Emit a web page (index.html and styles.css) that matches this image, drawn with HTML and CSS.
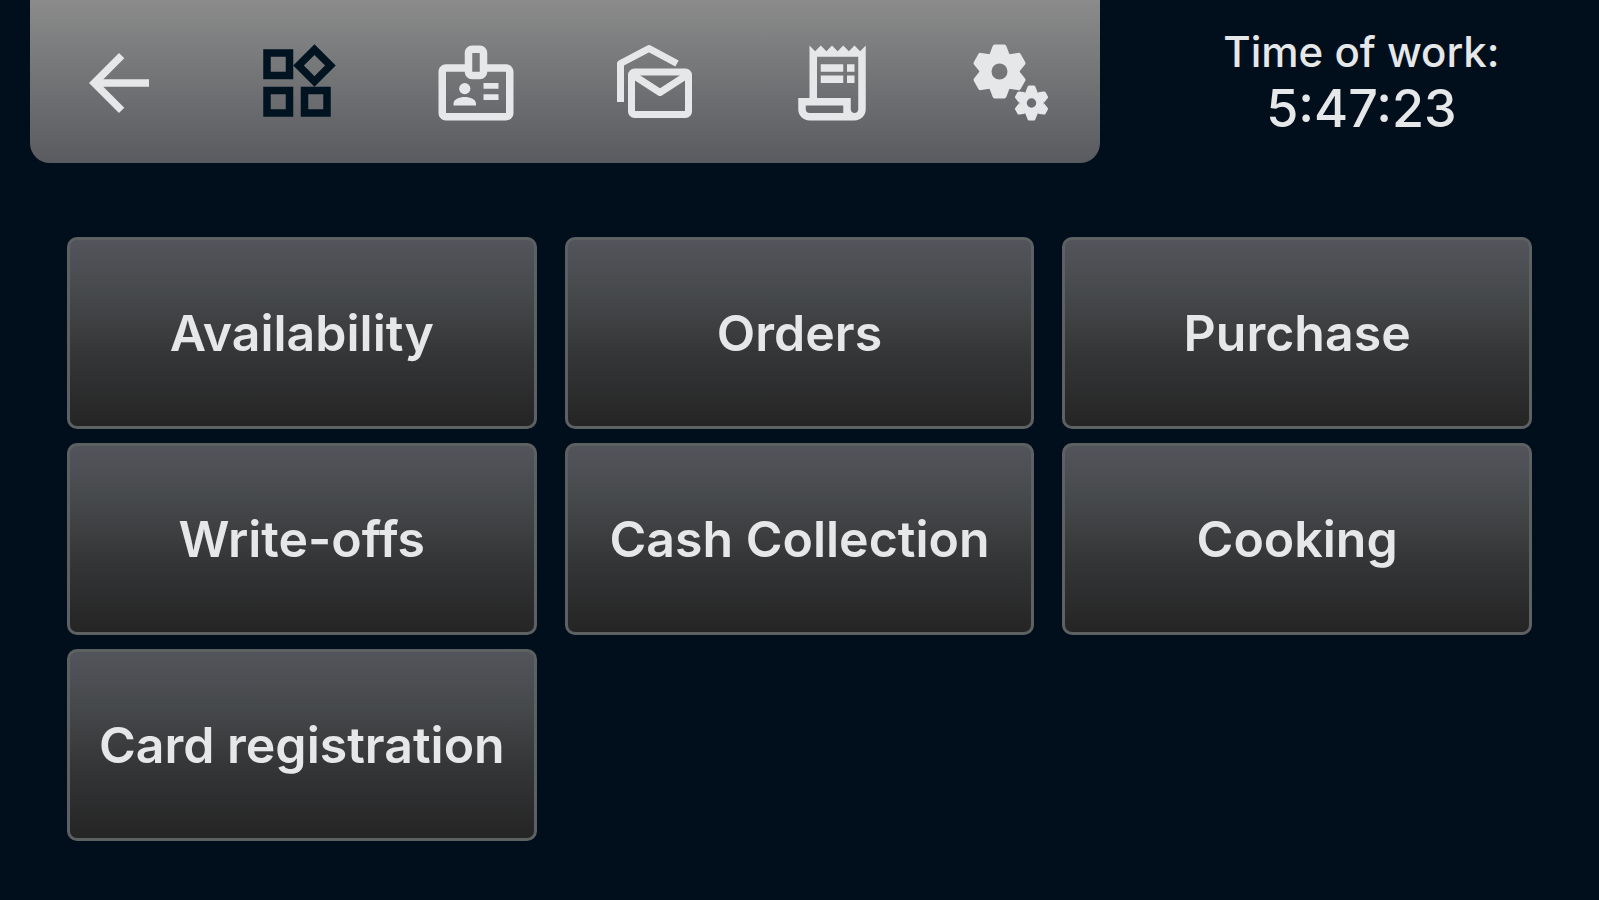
FILE: index.html
```html
<!DOCTYPE html>
<html lang="en">
<head>
  <meta charset="utf-8">
  <meta name="viewport" content="width=device-width, initial-scale=1">
  <title>Terminal menu</title>
  <link rel="stylesheet" href="styles.css">
</head>
<body>
  <header class="topbar">
    <nav class="toolbar" aria-label="Main">
      <button class="tool" type="button" aria-label="Back">
        <svg class="icon" viewBox="0 0 24 24"><path d="M20 11H7.83l5.59-5.59L12 4l-8 8 8 8 1.41-1.41L7.83 13H20z"/></svg>
      </button>
      <button class="tool tool--active" type="button" aria-label="Modules" aria-current="page">
        <svg class="icon" viewBox="0 0 24 24"><path d="M16.66 4.52l2.83 2.83-2.83 2.83-2.83-2.83 2.83-2.83M9 5v4H5V5h4m10 10v4h-4v-4h4M9 15v4H5v-4h4m7.66-13.31L11 7.34 16.66 13l5.66-5.66-5.66-5.65zM11 3H3v8h8V3zm10 10h-8v8h8v-8zm-10 0H3v8h8v-8z"/></svg>
      </button>
      <button class="tool" type="button" aria-label="Staff">
        <svg class="icon" viewBox="0 0 24 24"><path d="M20 7h-5V4c0-1.1-.9-2-2-2h-2c-1.1 0-2 .9-2 2v3H4c-1.1 0-2 .9-2 2v11c0 1.1.9 2 2 2h16c1.1 0 2-.9 2-2V9c0-1.1-.9-2-2-2zm-9-3h2v5h-2V4zm9 16H4V9h5c0 1.1.9 2 2 2h2c1.1 0 2-.9 2-2h5v11z"/><circle cx="9" cy="13.5" r="1.5"/><path d="M11.08 16.18C10.44 15.9 9.74 15.75 9 15.75s-1.44.15-2.08.43c-.56.24-.92.79-.92 1.39V18h6v-.43c0-.6-.36-1.15-.92-1.39zM14 15h4v1.5h-4zM14 12h4v1.5h-4z"/></svg>
      </button>
      <button class="tool" type="button" aria-label="Messages">
        <svg class="icon icon--line" viewBox="0 0 90 90"><path d="M11.500 64V25.500L40 10.500 68 25.500"/><rect x="22.500" y="34" width="57" height="42.500" rx="3"/><path d="M24 37l27 17.500L78 37"/></svg>
      </button>
      <button class="tool" type="button" aria-label="Receipts">
        <svg class="icon" viewBox="0 0 24 24"><path d="M19.500 3.500 18 2l-1.500 1.500L15 2l-1.500 1.500L12 2l-1.500 1.500L9 2 7.500 3.500 6 2v14H3v3c0 1.660 1.340 3 3 3h12c1.660 0 3-1.340 3-3V2l-1.500 1.500zM15 20H6c-.55 0-1-.45-1-1v-1h10v2zm4-1c0 .55-.45 1-1 1s-1-.45-1-1v-3H8V5h11v14z"/><path d="M9 7h6v2H9zM16 7h2v2h-2zM9 10h6v2H9zM16 10h2v2h-2z"/></svg>
      </button>
      <button class="tool" type="button" aria-label="Settings">
        <svg class="icon" viewBox="0 0 90 90">
          <g transform="translate(33.500 33.500)">
            <circle class="ring" r="14" stroke-width="12"/>
            <path id="tooth" d="M-10-17L-7-25Q-6.500-27-4.500-27H4.500Q6.500-27 7-25L10-17Z"/>
            <use href="#tooth" transform="rotate(60)"/><use href="#tooth" transform="rotate(120)"/><use href="#tooth" transform="rotate(180)"/><use href="#tooth" transform="rotate(240)"/><use href="#tooth" transform="rotate(300)"/>
          </g>
          <g transform="translate(65.500 65)">
            <circle class="ring" r="8.500" stroke-width="7.500"/>
            <path id="tooth-small" d="M-6-11L-4-16Q-3.700-17.500-2.500-17.500H2.500Q3.700-17.500 4-16L6-11Z"/>
            <use href="#tooth-small" transform="rotate(60)"/><use href="#tooth-small" transform="rotate(120)"/><use href="#tooth-small" transform="rotate(180)"/><use href="#tooth-small" transform="rotate(240)"/><use href="#tooth-small" transform="rotate(300)"/>
          </g>
        </svg>
      </button>
    </nav>
    <div class="clock">
      <span class="clock-label">Time of work:</span>
      <time class="clock-value">5:47:23</time>
    </div>
  </header>
  <main class="tiles">
    <button class="tile" type="button">Availability</button>
    <button class="tile" type="button">Orders</button>
    <button class="tile" type="button">Purchase</button>
    <button class="tile" type="button">Write-offs</button>
    <button class="tile" type="button">Cash Collection</button>
    <button class="tile" type="button">Cooking</button>
    <button class="tile" type="button">Card registration</button>
  </main>
</body>
</html>
```
FILE: styles.css
```css
* {
  box-sizing: border-box;
}

body {
  margin: 0;
  min-height: 100vh;
  background: #000f1b;
  color: #e6e7e8;
  font-family: Inter, "Liberation Sans", sans-serif;
}

button {
  font: inherit;
  color: inherit;
  cursor: pointer;
}

.topbar {
  display: grid;
  grid-template-columns: 15fr 7fr;
  padding-left: 30px;
}

.toolbar {
  display: grid;
  grid-template-columns: repeat(6, 1fr);
  padding: 38px 0 35px;
  border-radius: 0 0 20px 20px;
  background: linear-gradient(#8b8b8b, #717375 50%, #595b60);
}

.tool {
  display: flex;
  justify-content: center;
  padding: 0;
  border: 0;
  background: none;
}

.tool--active {
  color: #001320;
}

.icon {
  width: 90px;
  height: 90px;
  fill: currentColor;
}

.icon--line {
  fill: none;
  stroke: currentColor;
  stroke-width: 7;
  stroke-linejoin: round;
}

.ring {
  fill: none;
  stroke: currentColor;
}

.clock {
  display: flex;
  flex-direction: column;
  align-items: center;
  padding: 24px 0 0 24px;
  font-weight: 500;
}

.clock-label {
  font-size: 42px;
  line-height: 56px;
}

.clock-value {
  font-size: 52px;
  line-height: 58px;
}

.tiles {
  display: grid;
  grid-template-columns: repeat(3, 1fr);
  gap: 14px 28px;
  padding: 74px 67px 56px;
}

.tile {
  height: 192px;
  padding: 0;
  border: 3px solid #5e6162;
  border-radius: 10px;
  background: linear-gradient(#53555c, #46494b 30%, #353638 60%, #242424) border-box;
  font-size: 50px;
  font-weight: 600;
}
```
